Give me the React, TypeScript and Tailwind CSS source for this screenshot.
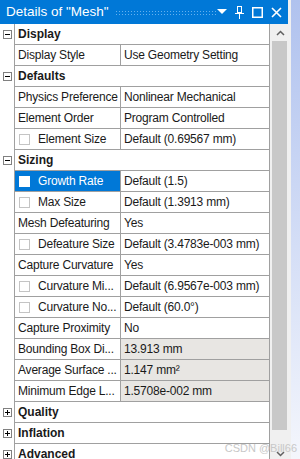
type Row =
  | { kind: "header"; label: string; open: boolean }
  | { kind: "prop"; label: string; value: string; check?: boolean; selected?: boolean; readonly?: boolean };

const rows: Row[] = [
  { kind: "header", label: "Display", open: true },
  { kind: "prop", label: "Display Style", value: "Use Geometry Setting" },
  { kind: "header", label: "Defaults", open: true },
  { kind: "prop", label: "Physics Preference", value: "Nonlinear Mechanical" },
  { kind: "prop", label: "Element Order", value: "Program Controlled" },
  { kind: "prop", label: "Element Size", value: "Default (0.69567 mm)", check: true },
  { kind: "header", label: "Sizing", open: true },
  { kind: "prop", label: "Growth Rate", value: "Default (1.5)", check: true, selected: true },
  { kind: "prop", label: "Max Size", value: "Default (1.3913 mm)", check: true },
  { kind: "prop", label: "Mesh Defeaturing", value: "Yes" },
  { kind: "prop", label: "Defeature Size", value: "Default (3.4783e-003 mm)", check: true },
  { kind: "prop", label: "Capture Curvature", value: "Yes" },
  { kind: "prop", label: "Curvature Mi...", value: "Default (6.9567e-003 mm)", check: true },
  { kind: "prop", label: "Curvature No...", value: "Default (60.0°)", check: true },
  { kind: "prop", label: "Capture Proximity", value: "No" },
  { kind: "prop", label: "Bounding Box Di...", value: "13.913 mm", readonly: true },
  { kind: "prop", label: "Average Surface ...", value: "1.147 mm²", readonly: true },
  { kind: "prop", label: "Minimum Edge L...", value: "1.5708e-002 mm", readonly: true },
  { kind: "header", label: "Quality", open: false },
  { kind: "header", label: "Inflation", open: false },
  { kind: "header", label: "Advanced", open: false },
];

function ToggleBox({ open }: { open: boolean }) {
  return (
    <svg width="9" height="9" viewBox="0 0 9 9" className="block">
      <rect x="0.5" y="0.5" width="8" height="8" fill="white" stroke="#808080" />
      <line x1="2" y1="4.5" x2="7" y2="4.5" stroke="#000" />
      {!open && <line x1="4.5" y1="2" x2="4.5" y2="7" stroke="#000" />}
    </svg>
  );
}

function Check({ light }: { light?: boolean }) {
  return (
    <span
      className={
        "inline-block w-[11px] h-[11px] border shrink-0 " +
        (light ? "bg-white border-white" : "bg-white border-[#c4c4c4]")
      }
    />
  );
}

export default function App() {
  return (
    <div
      className="w-[300px] h-[459px] flex overflow-hidden bg-white text-[12px] text-[#1a1a1a] relative"
      style={{ fontFamily: '"Liberation Sans", Arial, sans-serif' }}
    >
      <div className="w-[291px] flex flex-col bg-[#f0f0f0]">
        {/* title bar */}
        <div className="h-[24px] w-[288px] bg-[#0078d7] flex items-center pl-[6px] text-white shrink-0">
          <span className="text-[13.5px] leading-none whitespace-nowrap">Details of "Mesh"</span>
          <div className="ml-[6px] w-[108px] h-[5px] bg-[radial-gradient(circle,#64b0ee_0.8px,transparent_0.9px)] bg-[length:3px_3px] mt-[1px]" />
          <div className="ml-auto flex items-center gap-[8px] pr-[6px]">
            <svg width="10" height="6" viewBox="0 0 10 6">
              <polygon points="0,0 10,0 5,5" fill="white" />
            </svg>
            <svg width="9" height="14" viewBox="0 0 9 14">
              <rect x="2.5" y="1.5" width="4" height="6" fill="none" stroke="white" />
              <line x1="0" y1="8.5" x2="9" y2="8.5" stroke="white" />
              <line x1="4.5" y1="8" x2="4.5" y2="14" stroke="white" />
            </svg>
            <svg width="11" height="11" viewBox="0 0 11 11">
              <rect x="0.75" y="0.75" width="9.5" height="9.5" fill="none" stroke="white" strokeWidth="1.5" />
            </svg>
            <svg width="11" height="11" viewBox="0 0 11 11">
              <path d="M1 1 L10 10 M10 1 L1 10" stroke="white" strokeWidth="1.6" />
            </svg>
          </div>
        </div>

        <div className="flex flex-1 min-h-0">
          {/* property grid */}
          <div className="w-[270px] bg-white flex flex-col tracking-[-0.2px]">
            {rows.map((r, i) =>
              r.kind === "header" ? (
                <div key={i} className="flex h-[21px] shrink-0">
                  <div className="w-[14px] flex items-center justify-center">
                    <ToggleBox open={r.open} />
                  </div>
                  <div className="flex-1 border-l border-r border-b border-[#a0a0a0] flex items-center pl-[3px] font-bold tracking-normal">
                    {r.label}
                  </div>
                </div>
              ) : (
                <div key={i} className="flex h-[21px] shrink-0">
                  <div className="w-[14px]" />
                  <div className="flex-1 flex border-l border-r border-b border-[#a0a0a0]">
                    <div
                      className={
                        "w-[106px] border-r border-[#a0a0a0] flex items-center whitespace-nowrap overflow-hidden " +
                        (r.selected ? "bg-[#0078d7] text-white " : "") +
                        (r.check ? "pl-[4px]" : "pl-[3px]")
                      }
                    >
                      {r.check && <Check light={r.selected} />}
                      <span className={r.check ? "ml-[8px]" : ""}>{r.label}</span>
                    </div>
                    <div
                      className={
                        "flex-1 flex items-center pl-[3px] whitespace-nowrap " +
                        (r.readonly ? "bg-[#e8e6e3]" : "")
                      }
                    >
                      {r.value}
                    </div>
                  </div>
                </div>
              )
            )}
          </div>

          {/* scrollbar */}
          <div className="w-[21px] flex flex-col items-center">
            <div className="h-[17px] flex items-center justify-center">
              <svg width="9" height="6" viewBox="0 0 9 6">
                <path d="M1 5 L4.5 1.5 L8 5" stroke="#606060" strokeWidth="1.5" fill="none" />
              </svg>
            </div>
            <div className="w-[15px] h-[389px] bg-[#c8c8c8] ml-[-3px]" />
            <div className="flex-1 flex items-end pb-[2px]">
              <svg width="9" height="6" viewBox="0 0 9 6">
                <path d="M1 1 L4.5 4.5 L8 1" stroke="#606060" strokeWidth="1.5" fill="none" />
              </svg>
            </div>
          </div>
        </div>
      </div>
      <div className="flex-1 bg-gradient-to-b from-[#b0c2ee] to-[#f4f6fc]" />

      <span className="absolute right-[3px] bottom-[5px] text-[11px] text-[#c8c8c8] leading-none">
        CSDN @Bill66
      </span>
    </div>
  );
}
